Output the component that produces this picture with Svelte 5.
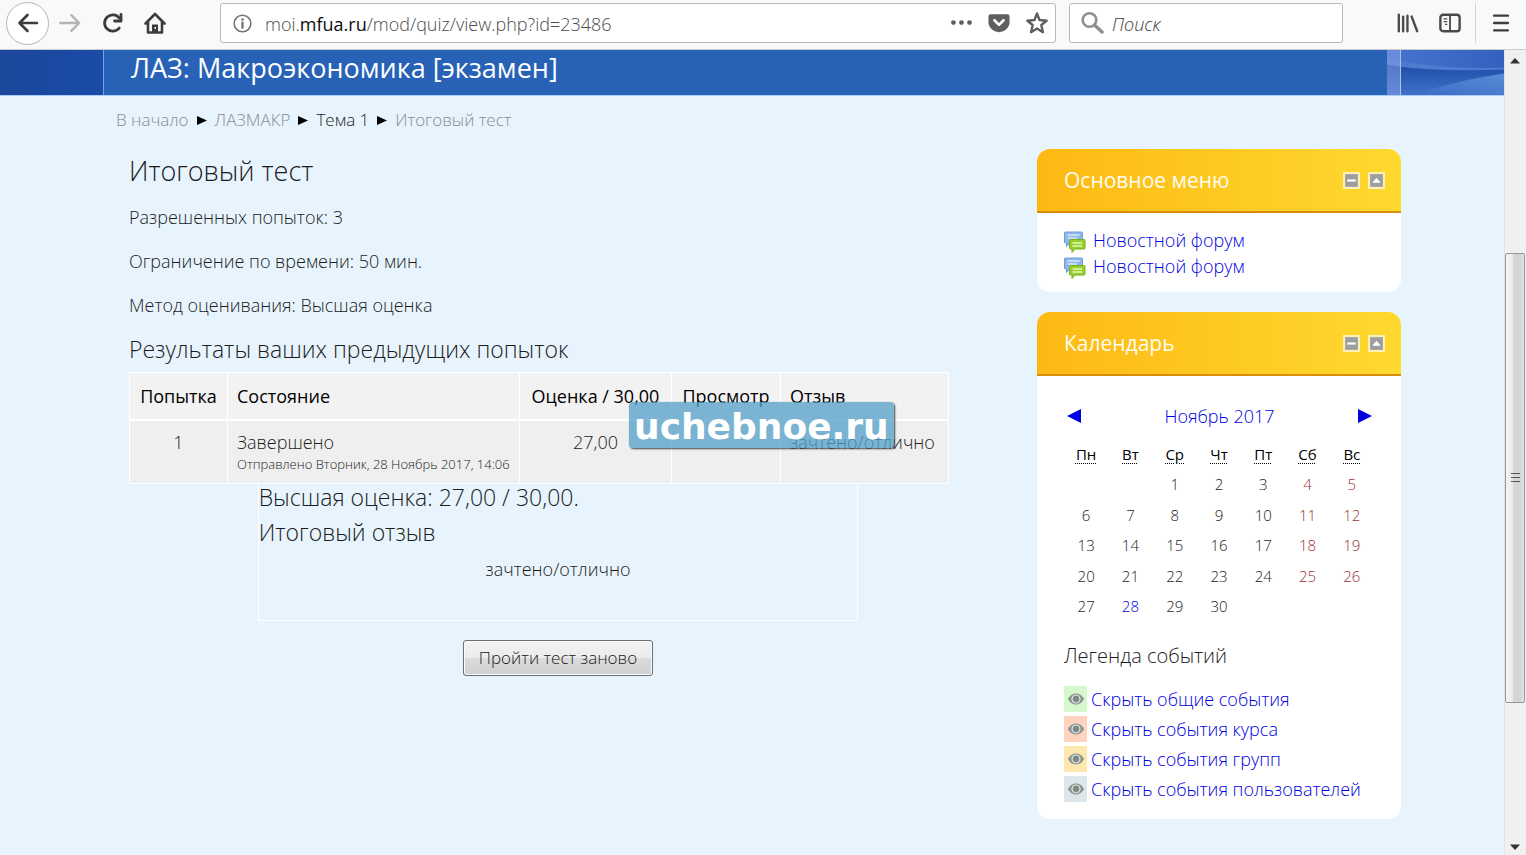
<script>
  const crumbs = [
    { text: 'В начало', current: false },
    { text: 'ЛАЗМАКР', current: false },
    { text: 'Тема 1', current: true },
    { text: 'Итоговый тест', current: false }
  ];
  const facts = ['Разрешенных попыток: 3', 'Ограничение по времени: 50 мин.', 'Метод оценивания: Высшая оценка'];
  const forums = ['Новостной форум', 'Новостной форум'];
  const days = ['Пн', 'Вт', 'Ср', 'Чт', 'Пт', 'Сб', 'Вс'];
  const weeks = Array.from({ length: 5 }, (_, w) =>
    Array.from({ length: 7 }, (_, d) => {
      const n = w * 7 + d - 1;
      return n >= 1 && n <= 30 ? n : '';
    })
  );
  const legend = [
    { text: 'Скрыть общие события', kind: 'site' },
    { text: 'Скрыть события курса', kind: 'course' },
    { text: 'Скрыть события групп', kind: 'group' },
    { text: 'Скрыть события пользователей', kind: 'user' }
  ];
</script>

{#snippet blockHead(title)}
  <header class="block-head">
    <h2>{title}</h2>
    <div class="block-actions">
      <button aria-label="Свернуть">
        <svg viewBox="0 0 16 16"><rect x="1" y="1" width="14" height="14" fill="#9d9e9f" stroke="#fff0b8" stroke-width="2" /><rect x="4" y="7" width="8" height="2" fill="#fff" /></svg>
      </button>
      <button aria-label="Переместить">
        <svg viewBox="0 0 16 16"><rect x="1" y="1" width="14" height="14" fill="#9d9e9f" stroke="#fff0b8" stroke-width="2" /><path d="M4 10L8 5.500L12 10Z" fill="#fff" /></svg>
      </button>
    </div>
  </header>
{/snippet}

<div class="window">
  <nav class="toolbar">
    <button class="tool back" aria-label="Назад">
      <svg viewBox="0 0 24 24"><path d="M21 12H4M11.500 4L3.500 12L11.500 20" fill="none" stroke="#3c3c3d" stroke-width="2.600" stroke-linecap="round" stroke-linejoin="round" /></svg>
    </button>
    <button class="tool forward" aria-label="Вперёд">
      <svg viewBox="0 0 24 24"><path d="M1.500 12H21M13.500 3.500L22 12L13.500 20.500" fill="none" stroke="#b3b3b4" stroke-width="2.600" stroke-linecap="round" stroke-linejoin="round" /></svg>
    </button>
    <button class="tool reload" aria-label="Обновить">
      <svg viewBox="0 0 24 24"><path d="M18.300 17A8.200 8.200 0 1 1 18.300 7" fill="none" stroke="#3c3c3d" stroke-width="2.800" stroke-linecap="round" /><path d="M20 3.500V10H13.500" fill="none" stroke="#3c3c3d" stroke-width="2.800" stroke-linecap="round" stroke-linejoin="round" /></svg>
    </button>
    <button class="tool home" aria-label="Домой">
      <svg viewBox="0 0 24 24"><path d="M2.500 12.500L12 3L21.500 12.500M5 11V21.500H19V11" fill="none" stroke="#3c3c3d" stroke-width="2.600" stroke-linecap="round" stroke-linejoin="round" /><path d="M9 21V13.500H15V21Z" fill="#3c3c3d" /><rect x="11.500" y="16" width="1.500" height="2" fill="#f9f9fa" /></svg>
    </button>
    <div class="address">
      <svg class="info" viewBox="0 0 20 20"><circle cx="10" cy="10" r="8.800" fill="none" stroke="#737373" stroke-width="1.600" /><circle cx="10" cy="5.800" r="1.400" fill="#737373" /><path d="M10 9V14.500" stroke="#737373" stroke-width="2.400" stroke-linecap="round" /></svg>
      <div class="url">moi.<b>mfua.ru</b>/mod/quiz/view.php?id=23486</div>
      <button class="tool" aria-label="Действия">
        <svg viewBox="0 0 24 24"><g fill="#5f5f60"><circle cx="3.700" cy="11.500" r="2.600" /><circle cx="12.500" cy="11.500" r="2.600" /><circle cx="21.300" cy="11.500" r="2.600" /></g></svg>
      </button>
      <button class="tool" aria-label="Сохранить в Pocket">
        <svg viewBox="0 0 24 24"><path d="M3 2.500H21Q23.500 2.500 23.500 5V11C23.500 17 18.500 22 12 22S.5 17 .5 11V5Q.5 2.500 3 2.500Z" fill="#5f5f60" /><path d="M7 9L12 14L17 9" fill="none" stroke="#fff" stroke-width="2.800" stroke-linecap="round" stroke-linejoin="round" /></svg>
      </button>
      <button class="tool" aria-label="Добавить в закладки">
        <svg viewBox="0 0 24 24"><path d="M12 1.500L14.700 8.700L22.500 9.500L16.700 14.200L18.500 22L12 18L5.500 22L7.300 14.200L1.500 9.500L9.300 8.700Z" fill="none" stroke="#5f5f60" stroke-width="2.600" stroke-linejoin="round" /></svg>
      </button>
    </div>
    <label class="search">
      <svg viewBox="0 0 24 24"><circle cx="9.500" cy="9" r="6.800" fill="none" stroke="#8f8f90" stroke-width="2.600" /><path d="M14.500 14L22 21" stroke="#8f8f90" stroke-width="3.400" stroke-linecap="round" /></svg>
      <input type="text" placeholder="Поиск" aria-label="Поиск" />
    </label>
    <button class="tool library" aria-label="Библиотека">
      <svg viewBox="0 0 24 24"><path d="M2 3V21M6.700 5V21M11.400 4V21" stroke="#4a4a4b" stroke-width="2.600" stroke-linecap="round" /><path d="M16 5L22 21" stroke="#4a4a4b" stroke-width="2.600" stroke-linecap="round" /></svg>
    </button>
    <button class="tool sidebar-toggle" aria-label="Боковая панель">
      <svg viewBox="0 0 24 24"><rect x="1.500" y="3" width="21" height="18" rx="3" fill="none" stroke="#4a4a4b" stroke-width="2.600" /><path d="M12 3V21" stroke="#4a4a4b" stroke-width="2" /><path d="M5 7.500H9M5 10.500H9M6.500 13.500H9" stroke="#4a4a4b" stroke-width="1.500" /></svg>
    </button>
    <button class="tool menu" aria-label="Меню">
      <svg viewBox="0 0 24 24"><path d="M4.500 4H19.500M4.500 12H19.500M4.500 20H19.500" stroke="#3c3c3d" stroke-width="2.600" stroke-linecap="round" /></svg>
    </button>
  </nav>

  <div class="viewport">
    <div class="page">
      <header class="banner">
        <div class="banner-left"></div>
        <h1>ЛАЗ: Макроэкономика [экзамен]</h1>
        <svg class="banner-right" viewBox="0 0 117 46" preserveAspectRatio="none">
          <defs>
            <linearGradient id="sky" x1="0" y1="0" x2="1" y2="0"><stop offset="0" stop-color="#4674cf" /><stop offset="1" stop-color="#3461bf" /></linearGradient>
            <linearGradient id="wave" x1="0" y1="0" x2="0" y2="1"><stop offset="0" stop-color="#1f4da8" /><stop offset="1" stop-color="#3f70ca" /></linearGradient>
            <linearGradient id="glow" x1="0" y1="1" x2="1" y2="0"><stop offset="0" stop-color="#3b6cc8" /><stop offset="1" stop-color="#5a8bd4" /></linearGradient>
          </defs>
          <rect width="117" height="46" fill="url(#sky)" />
          <path d="M0 9C30 15 70 20 117 18V22C70 22 30 20 0 15Z" fill="#4c7bd0" />
          <path d="M0 15C30 20 70 22 117 20V46H0Z" fill="url(#wave)" />
          <path d="M28 46C50 37 80 30 117 24V46Z" fill="url(#glow)" />
          <rect width="13" height="46" fill="#8ba6e6" opacity=".5" />
          <rect x="13" width="1" height="46" fill="#a9c2f3" />
        </svg>
      </header>

      <nav class="crumbs">
        {#each crumbs as c, i}
          {#if i}<svg viewBox="0 0 10 10"><path d="M0 1L10 5.500L0 10Z" /></svg>{/if}
          <a href="#top" class:current={c.current}>{c.text}</a>
        {/each}
      </nav>

      <div class="columns">
        <main>
          <h2>Итоговый тест</h2>
          {#each facts as f}<p>{f}</p>{/each}
          <h3>Результаты ваших предыдущих попыток</h3>
          <div class="attempts">
            <table>
              <colgroup><col class="c-try" /><col class="c-state" /><col class="c-grade" /><col class="c-view" /><col /></colgroup>
              <thead>
                <tr><th class="mid">Попытка</th><th>Состояние</th><th class="mid">Оценка / 30,00</th><th class="mid">Просмотр</th><th>Отзыв</th></tr>
              </thead>
              <tbody>
                <tr>
                  <td class="mid">1</td>
                  <td>Завершено<small>Отправлено Вторник, 28 Ноябрь 2017, 14:06</small></td>
                  <td class="mid">27,00</td>
                  <td></td>
                  <td>зачтено/отлично</td>
                </tr>
              </tbody>
            </table>
            <div class="stamp">uchebnoe.ru</div>
          </div>
          <section class="feedback">
            <h3>Высшая оценка: 27,00 / 30,00.</h3>
            <h3>Итоговый отзыв</h3>
            <p>зачтено/отлично</p>
          </section>
          <button class="retry">Пройти тест заново</button>
        </main>

        <aside>
          <section class="block">
            {@render blockHead('Основное меню')}
            <ul class="forums">
              {#each forums as f}
                <li>
                  <svg viewBox="0 0 22 22"><path d="M1.500 1H17.500Q18.500 1 18.500 2V12H6L2.500 15.500V12H1.500Q.5 12 .5 11V2Q.5 1 1.500 1Z" fill="#8fb7ec" stroke="#6d9cdc" /><path d="M3.500 4H15.500M3.500 7H13" stroke="#d8e8fb" stroke-width="1.500" /><path d="M6.500 8.500H20Q21 8.500 21 9.500V17Q21 18 20 18H11L8 21.500V18H6.500Q5.500 18 5.500 17V9.500Q5.500 8.500 6.500 8.500Z" fill="#98cf2f" stroke="#77b01c" /><path d="M8.500 12H18M8.500 15H18" stroke="#e6f7ba" stroke-width="1.500" /></svg>
                  <a href="#forum">{f}</a>
                </li>
              {/each}
            </ul>
          </section>

          <section class="block">
            {@render blockHead('Календарь')}
            <div class="calendar">
              <div class="month">
                <a href="#prev" aria-label="Предыдущий месяц"><svg viewBox="0 0 13 13"><path d="M13 0V13L0 6.500Z" /></svg></a>
                <a href="#month">Ноябрь 2017</a>
                <a href="#next" aria-label="Следующий месяц"><svg viewBox="0 0 13 13"><path d="M0 0V13L13 6.500Z" /></svg></a>
              </div>
              <table class="days">
                <thead><tr>{#each days as d}<th><abbr>{d}</abbr></th>{/each}</tr></thead>
                <tbody>
                  {#each weeks as week}
                    <tr>{#each week as n, d}<td class:weekend={d > 4} class:today={n === 28}>{n}</td>{/each}</tr>
                  {/each}
                </tbody>
              </table>
              <h3>Легенда событий</h3>
              <ul class="legend">
                {#each legend as l}
                  <li>
                    <span class="swatch {l.kind}"><svg viewBox="0 0 16 12"><path d="M0 6C2 2 5 .5 8 .5S14 2 16 6C14 10 11 11.500 8 11.500S2 10 0 6Z" fill="#8b9390" /><circle cx="8" cy="6" r="4" fill="none" stroke="#dfe6df" stroke-width="1.200" /><circle cx="8" cy="5.500" r="2.400" fill="#7d8583" /></svg></span>
                    <a href="#legend">{l.text}</a>
                  </li>
                {/each}
              </ul>
            </div>
          </section>
        </aside>
      </div>
    </div>

    <div class="scrollbar">
      <svg class="arrow" viewBox="0 0 10 6"><path d="M0 5.500L5 0L10 5.500Z" /></svg>
      <div class="track"><div class="thumb"><i></i><i></i><i></i></div></div>
      <svg class="arrow" viewBox="0 0 10 6"><path d="M0 .5L5 6L10 .5Z" /></svg>
    </div>
  </div>
</div>

<style>
  :global(body) { margin: 0; background: #e8f4fd; }
  .window { display: flex; flex-direction: column; height: 100vh; overflow: hidden; font: 300 18px/26px "Open Sans", "Noto Sans", sans-serif; color: #1c1c1c; }
  button, input { font: inherit; color: inherit; }
  h1, h2, h3, p, ul { margin: 0; padding: 0; font-weight: 300; }
  ul { list-style: none; }
  a { color: #0000e0; text-decoration: none; }
  svg { display: block; flex: none; }

  .toolbar { display: flex; align-items: center; height: 50px; flex: none; box-sizing: border-box; padding: 0 11px 3px 6px; background: #f9f9fa; border-bottom: 1px solid #ccc; }
  .tool { display: flex; align-items: center; justify-content: center; width: 24px; height: 24px; padding: 0; border: 0; background: none; flex: none; }
  .tool svg { width: 22px; height: 22px; }
  .back { width: 43px; height: 43px; border: 1px solid #b5b5b6; border-radius: 50%; background: #fff; }
  .back svg, .home svg, .reload svg { width: 24px; height: 24px; }
  .forward { margin-left: 9px; }
  .reload { margin-left: 19px; }
  .home { margin-left: 18px; }
  .address { display: flex; align-items: center; flex: 1; gap: 14px; margin-left: 53px; padding: 0 6px 0 12px; }
  .address, .search { height: 40px; box-sizing: border-box; background: #fff; border: 1px solid #b9b9ba; border-radius: 3px; }
  .info { width: 19px; height: 19px; }
  .url { flex: 1; color: #4c4c4d; margin-left: -1px; padding-top: 2px; }
  .url b { color: #0c0c0d; font-weight: 400; }
  .search { display: flex; align-items: center; gap: 8px; width: 274px; margin-left: 13px; padding: 0 10px; }
  .search svg { width: 24px; height: 24px; }
  .search input { flex: 1; min-width: 0; padding: 2px 0 0; border: 0; outline: 0; background: none; }
  .search input::placeholder { color: #3c3c3d; font-style: italic; font-weight: 300; opacity: 1; }
  .library { margin-left: 53px; }
  .sidebar-toggle { margin-left: 18px; }
  .menu { width: 40px; height: 40px; margin-left: 13px; padding-left: 10px; border-left: 1px solid #d5d5d6; }

  .viewport { display: flex; flex: 1; min-height: 0; }
  .page { flex: 1; min-width: 0; overflow: hidden; background: #e8f4fd; }
  .banner { display: flex; height: 45px; background: #2762b7; border-bottom: 1px solid #a9cdf5; }
  .banner-left { width: 103px; background: linear-gradient(90deg, #1b479b, #1a4ba8); border-right: 1px solid #7da0dc; }
  .banner h1 { flex: 1; padding-left: 27px; color: #fff; font-size: 27px; line-height: 36px; font-weight: 400; }
  .banner-right { width: 117px; height: 45px; }

  .crumbs { display: flex; align-items: center; gap: 8px; padding: 11px 116px 0; }
  .crumbs a { color: #848d94; font-size: 17px; }
  .crumbs a.current { color: #222; }
  .crumbs svg { width: 10px; height: 10px; }

  .columns { display: flex; align-items: flex-start; gap: 50px; padding: 17px 103px 0 129px; }
  main { flex: 1; min-width: 0; }
  main h2 { font-size: 27px; line-height: 42px; margin-bottom: 12px; }
  main p { margin-bottom: 18px; }
  main h3 { font-size: 23px; line-height: 35px; }
  main > h3 { margin-top: -4px; }
  .attempts { position: relative; width: 820px; max-width: 100%; }
  .attempts table { width: 100%; table-layout: fixed; border-collapse: collapse; margin-top: 5px; }
  .c-try { width: 98px; } .c-state { width: 292px; } .c-grade { width: 152px; } .c-view { width: 109px; }
  .attempts th, .attempts td { padding: 10px 9px; border: 1px solid #fff; text-align: left; vertical-align: top; white-space: nowrap; }
  .attempts th { background: #f2f2f2; color: #000; font-weight: 400; border-bottom-width: 2px; }
  .attempts td { height: 44px; padding-top: 8px; background: #efefef; }
  .attempts .mid { text-align: center; }
  small { display: block; font-size: 13px; line-height: 18px; }
  .stamp { position: absolute; left: 500px; top: 30px; box-sizing: border-box; height: 46px; padding: 0 5px; border-radius: 4px; background: rgb(84 160 200 / .76); box-shadow: 1px 1px 2px #444; color: #fff; font: 700 36px/50px "DejaVu Sans", sans-serif; }
  .feedback { width: 70%; box-sizing: border-box; height: 137px; margin: 0 auto 19px; border: 1px solid #fff; border-top: 0; }
  .feedback h3 { margin-top: -4px; padding-bottom: 4px; }
  .feedback p { padding-top: 2px; text-align: center; }
  .retry { display: block; margin: 0 auto; height: 36px; padding: 0 15px; border: 1px solid #6f6f6f; border-radius: 3px; background: linear-gradient(#f3f3f3, #ebebeb 50%, #dcdcdc 51%, #cfcfcf); box-shadow: inset 0 0 0 1px #fafafa; font-size: 17px; }

  .feedback::before { content: ""; display: table; }

  aside { display: flex; flex-direction: column; gap: 20px; width: 364px; margin-top: -1px; flex: none; }
  .block { overflow: hidden; border-radius: 13px; background: #fff; }
  .block-head { display: flex; align-items: center; justify-content: space-between; height: 62px; padding: 0 16px 0 27px; background: linear-gradient(90deg, #fdb913, #ffd92f); border-bottom: 2px solid #d98d0c; }
  .block-head h2 { color: #fffdf0; font-size: 21px; font-weight: 400; }
  .block-actions { display: flex; gap: 8px; }
  .block-actions button { padding: 0; border: 0; background: none; }
  .block-actions svg { width: 17px; height: 17px; }
  .forums { padding: 14px 27px 13px; }
  .forums li { display: flex; align-items: center; gap: 7px; }
  .forums svg { width: 22px; height: 22px; margin-top: 4px; }
  .calendar { padding: 27px 27px 13px; }
  .month { display: flex; justify-content: space-between; align-items: center; padding: 0 2px 0 3px; margin-bottom: 10px; }
  .month svg { width: 14px; height: 14px; fill: #0000e0; }
  .days { width: 100%; table-layout: fixed; border-collapse: collapse; font-size: 15px; }
  .days th, .days td { height: 30px; padding: 0; text-align: center; }
  .days tr:nth-child(even) td { height: 31px; }
  .days th { color: #000; font-weight: 400; }
  .days abbr { text-decoration: underline dotted 1px; text-underline-offset: 3px; }
  .days .weekend { color: #9c3535; }
  .days .today { color: #0000e0; }
  .calendar h3 { font-size: 20px; margin: 22px 0 17px; }
  .legend li { display: flex; gap: 4px; margin-bottom: 4px; }
  .swatch { display: flex; align-items: center; justify-content: center; width: 23px; height: 26px; }
  .swatch svg { width: 16px; height: 12px; }
  .site { background: #d6f8cd; } .course { background: #ffd3bd; } .group { background: #fee7ae; } .user { background: #dce7ec; }

  .scrollbar { display: flex; flex-direction: column; align-items: center; width: 20px; flex: none; padding: 8px 1px 5px 0; border-left: 1px solid #e3e3e3; background: #f0f0f0; }
  .arrow { width: 10px; height: 6px; fill: #333; }
  .track { flex: 1; width: 100%; display: flex; flex-direction: column; }
  .track::before { content: ""; flex: 189; }
  .track::after { content: ""; flex: 141; }
  .thumb { flex: 449; display: flex; flex-direction: column; align-items: center; justify-content: center; gap: 3px; border: 1px solid #979797; border-radius: 2px; background: linear-gradient(90deg, #f5f5f5, #e8e9ea 40%, #d3d5d9 42%, #d3d5d9 80%, #e3e4e6); }
  .thumb i { width: 9px; height: 1px; background: #555; }
</style>
